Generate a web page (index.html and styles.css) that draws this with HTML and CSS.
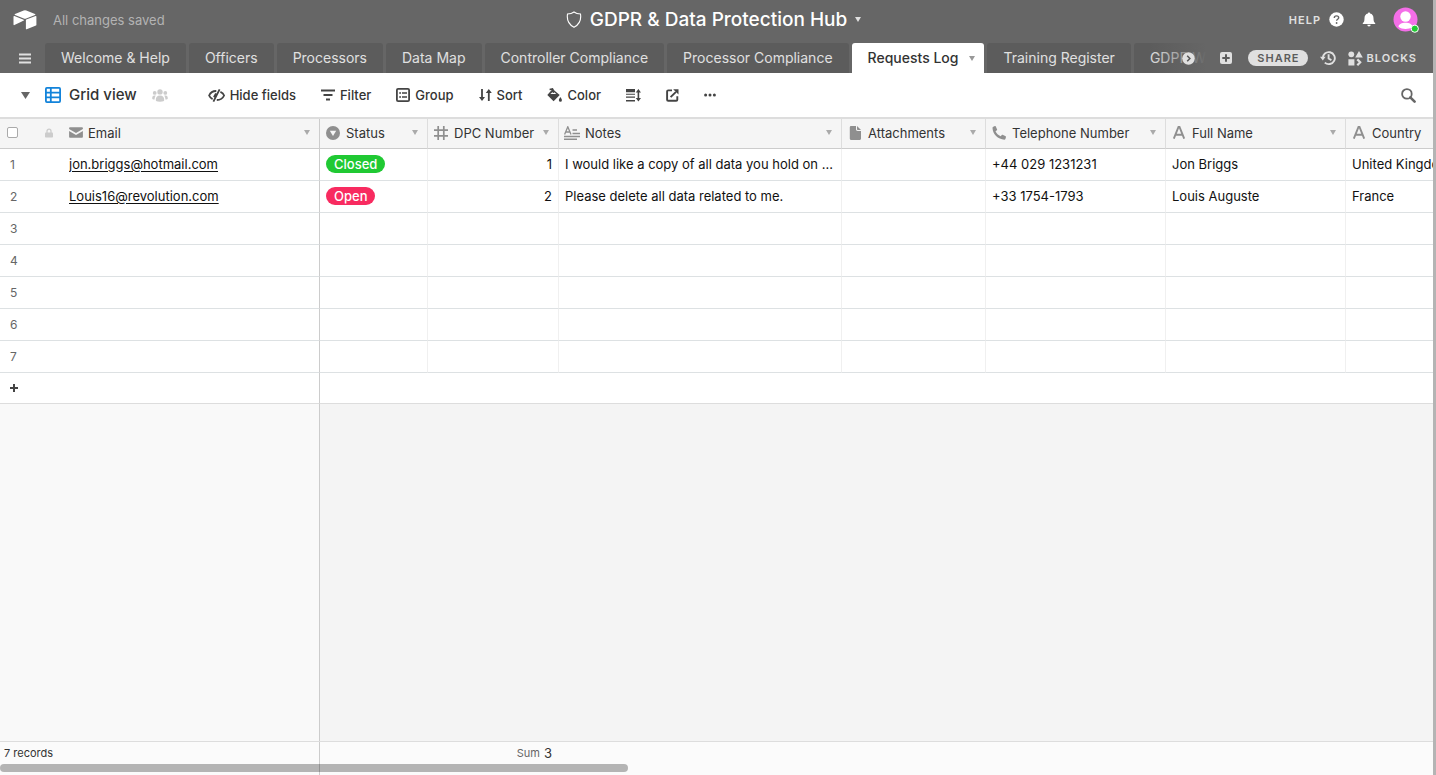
FILE: index.html
```html
<!DOCTYPE html>
<html lang="en">
<head>
<meta charset="utf-8">
<title>GDPR &amp; Data Protection Hub</title>
<link rel="stylesheet" href="styles.css">
</head>
<body>
<div class="app">
  <header class="header">
    <div class="topbar">
      <div class="topbar-left">
        <a href="#" class="logo" aria-label="Home"><svg width="24" height="20" viewBox="0 0 24 20" fill="#fff"><path d="M10.7.4 2 3.9c-.5.2-.5.8 0 1l8.800 3.500c.8.300 1.600.300 2.400 0L22 4.900c.5-.2.5-.8 0-1L13.300.4a3.400 3.400 0 0 0-2.600 0z"/><path d="M12.900 10.100v8.600c0 .4.400.7.800.5l9.300-3.600c.3-.1.400-.3.400-.5V6.500c0-.4-.4-.7-.8-.5l-9.300 3.600c-.2.100-.4.300-.4.500z"/><path d="m10.700 10.600-2.900 1.400-6.400 3.100c-.4.200-.9-.1-.9-.5V6.600c0-.500.5-.8.900-.6l9.200 3.700c.5.200.6.700.1.900z"/></svg></a>
        <span class="saved">All changes saved</span>
      </div>
      <button class="title"><svg width="16" height="18" viewBox="0 0 16 18" fill="none" stroke="#fff" stroke-width="1.1"><path d="M8 1C6.200 2.400 3.800 3 1.500 3c-.6 4 .2 10 6.500 13.300C14.300 13 15.100 7 14.500 3 12.200 3 9.800 2.400 8 1z"/></svg><span>GDPR &amp; Data Protection Hub</span><svg width="6" height="5" viewBox="0 0 6 5" fill="#e0e0e0"><path d="M0 0h6L3 5z"/></svg></button>
      <div class="topbar-right">
        <button class="help">HELP<svg width="15" height="15" viewBox="0 0 15 15"><circle cx="7.500" cy="7.500" r="7.200" fill="#fff"/><path d="M5.300 6c0-1.300 1-2.100 2.200-2.100S9.700 4.700 9.700 5.800c0 1.500-2.100 1.500-2.100 3" fill="none" stroke="#666" stroke-width="1.400"/><circle cx="7.600" cy="11" r=".9" fill="#666"/></svg></button>
        <button class="bell" aria-label="Notifications"><svg width="14" height="15" viewBox="0 0 14 15" fill="#fff"><path d="M7 .5c.7 0 1.100.5 1.100 1.100C10.400 2.100 11.500 4 11.500 6.200c0 3 .6 3.800 1.500 4.700.4.400.4 1.100-.3 1.100H1.300c-.7 0-.7-.7-.3-1.100.9-.9 1.500-1.700 1.500-4.700 0-2.200 1.100-4.100 3.400-4.600C5.900 1 6.300.5 7 .5zM5.300 12.800h3.400a1.700 1.700 0 0 1-3.400 0z"/></svg></button>
        <button class="avatar" aria-label="Account"><svg width="26" height="26" viewBox="0 0 26 26"><defs><clipPath id="face"><circle cx="12.500" cy="12.500" r="12"/></clipPath></defs><circle cx="12.500" cy="12.500" r="12" fill="#f46ee8"/><g clip-path="url(#face)" fill="#fff"><circle cx="12.500" cy="9.500" r="5.200"/><path d="M5.500 19.800c0-2.500 3.500-4 7-4s7 1.500 7 4c-1.800 1.600-4.500 2.200-7 2.200s-5.200-.6-7-2.200z"/></g><circle cx="21.800" cy="21.700" r="3.600" fill="#20c933" stroke="#fff" stroke-width="1"/></svg></button>
      </div>
    </div>
    <div class="tabbar">
      <button class="menu" aria-label="Menu"><svg width="12" height="11" viewBox="0 0 12 11" stroke="#e0e0e0" stroke-width="2"><path d="M0 1.500h12M0 5.500h12M0 9.500h12"/></svg></button>
      <nav class="tabs">
        <button class="tab">Welcome &amp; Help</button>
        <button class="tab">Officers</button>
        <button class="tab">Processors</button>
        <button class="tab">Data Map</button>
        <button class="tab">Controller Compliance</button>
        <button class="tab">Processor Compliance</button>
        <button class="tab active">Requests Log<svg width="6" height="5" viewBox="0 0 6 5" fill="#999"><path d="M0 0h6L3 5z"/></svg></button>
        <button class="tab">Training Register</button>
        <button class="tab">GDPR Wiki</button>
        <button class="more" aria-label="More tables"><svg width="13" height="13" viewBox="0 0 13 13"><circle cx="6.500" cy="6.500" r="6.200" fill="#e0e0e0"/><path d="m5.200 3.800 2.700 2.700-2.700 2.700" fill="none" stroke="#555" stroke-width="1.500"/></svg></button>
      </nav>
      <div class="actions">
        <button class="add" aria-label="Add table"><svg width="12" height="12" viewBox="0 0 12 12"><rect width="12" height="12" rx="2" fill="#e0e0e0"/><path d="M6 2.300v7.400M2.300 6h7.400" stroke="#5c5c5c" stroke-width="2"/></svg></button>
        <button class="share">SHARE</button>
        <button class="history" aria-label="History"><svg width="16" height="16" viewBox="0 0 16 16" fill="none" stroke="#e0e0e0" stroke-width="1.900"><path d="M2.800 8.400a6 6 0 1 1 2 4.200M8.600 4.300v4.200l2.800 1.600"/><path d="M0 6.800h5.600L2.800 10.400z" fill="#e0e0e0" stroke="none"/></svg></button>
        <button class="blocks"><svg width="15" height="15" viewBox="0 0 15 15" fill="#e0e0e0"><circle cx="3.300" cy="3.300" r="2.900"/><path d="M11 0l3.800 6.400H7.200zM.4 8.200h6V14.400h-6z"/><path d="m9.300 8.400 2.900 2.900-2.900 2.900" fill="none" stroke="#e0e0e0" stroke-width="2.200"/></svg>BLOCKS</button>
      </div>
    </div>
  </header>

  <div class="toolbar">
    <button class="collapse" aria-label="Toggle views"><svg width="9" height="7" viewBox="0 0 9 7" fill="#666"><path d="M0 0h9L4.500 7z"/></svg></button>
    <button class="view"><svg width="16" height="16" viewBox="0 0 16 16" fill="none" stroke="#1283da" stroke-width="1.800"><rect x=".9" y=".9" width="14.200" height="14.200" rx="1"/><path d="M5.800 1v14M1 5.600h14M1 10.400h14"/></svg><span>Grid view</span></button>
    <span class="people"><svg width="16" height="13" viewBox="0 0 16 13" fill="#ccc"><circle cx="8" cy="2.900" r="2.700"/><circle cx="2.700" cy="3.900" r="1.900"/><circle cx="13.300" cy="3.900" r="1.900"/><path d="M3.800 11c0-2.700 1.300-4.400 4.200-4.400s4.200 1.700 4.200 4.400c0 1.200-.8 1.700-4.200 1.700S3.800 12.200 3.800 11zM.2 9.200c0-1.800.7-2.800 2.200-2.800.6 0 1 .1 1.400.4-.9 1-1.200 2.200-1.200 3.800C1 10.600.2 10.200.2 9.200zM15.800 9.200c0-1.800-.7-2.800-2.200-2.800-.6 0-1 .1-1.400.4.900 1 1.200 2.200 1.200 3.800 1.600 0 2.400-.4 2.400-1.400z"/></svg></span>
    <div class="tools">
      <button><svg width="17" height="13" viewBox="0 0 17 13" fill="none" stroke="#444" stroke-width="1.800"><path d="M8.300 2C4.300 1.900 2 4.500 1.100 6.500c.6 1.500 1.700 2.700 3.500 3.600M12.400 2.900c2 .9 3.200 2.200 3.700 3.600-.9 2-3.200 4.500-7.300 4.500M11.600.4 5.400 12.600M8 4.400 5.900 8.300"/></svg>Hide fields</button>
      <button><svg width="14" height="12" viewBox="0 0 14 12" stroke="#444" stroke-width="2"><path d="M0 1.500h14M2.500 6h9M5 10.500h4"/></svg>Filter</button>
      <button><svg width="14" height="14" viewBox="0 0 14 14" fill="none" stroke="#444"><rect x=".9" y=".9" width="12.200" height="12.200" rx="1.200" stroke-width="1.800"/><path d="M3.200 5h1.800M6 5h5M3.200 9h1.800M6 9h5" stroke-width="1.600"/></svg>Group</button>
      <button><svg width="13" height="12" viewBox="0 0 13 12" fill="#444"><path d="M2.100 0h1.800v8H6L3 12 0 8h2.100zM8.900 12h1.800V4h2.100L9.800 0l-3 4h2.100z"/></svg>Sort</button>
      <button><svg width="15" height="14" viewBox="0 0 15 14"><path d="M5.600 1.100 12.700 7 6.600 13.200.3 7z" fill="#444"/><path d="M2.600 1.400 5.500.9l1.800 4" fill="none" stroke="#444" stroke-width="1.500"/><path d="M3.300 6.100h6L6.300 3.400z" fill="#fff"/><path d="M6.300 2v3" stroke="#444" stroke-width="1.200"/><path d="M13.300 9c1 1.500 1.600 2.300 1.600 3.200a1.500 1.500 0 0 1-3 0c0-.9.600-1.700 1.400-3.200z" fill="#444"/></svg>Color</button>
      <button aria-label="Row height"><svg width="15" height="13" viewBox="0 0 15 13" fill="#444"><path d="M0 0h9v3.300H0zM0 4.800h9v1H0zM0 7.600h9v1.200H0zM0 11h9v1.500H0zM11.600 2.500h1.600v7.500h-1.600z"/><path d="M12.400 0 15 3.400H9.800zM12.400 12.500 9.800 9.100H15z"/></svg></button>
      <button aria-label="Share view"><svg width="13" height="13" viewBox="0 0 13 13" fill="none" stroke="#444" stroke-width="1.900"><path d="M6 1.400H2.200c-.7 0-1.100.4-1.100 1.100v8.200c0 .7.400 1.100 1.100 1.100h8c.7 0 1.100-.4 1.100-1.100V7.200M4.600 8.200 10 2.800"/><path d="M7.200.3h5.300v5.300z" fill="#444" stroke="none"/></svg></button>
      <button aria-label="More options"><svg width="12" height="4" viewBox="0 0 12 4" fill="#444"><circle cx="1.600" cy="2" r="1.500"/><circle cx="6" cy="2" r="1.500"/><circle cx="10.400" cy="2" r="1.500"/></svg></button>
    </div>
    <button class="search" aria-label="Search"><svg width="15" height="15" viewBox="0 0 15 15" fill="none" stroke="#666"><circle cx="5.900" cy="5.900" r="4.800" stroke-width="1.800"/><path d="m9.300 9.300 4.300 4.300" stroke-width="2.600" stroke-linecap="round"/></svg></button>
  </div>

  <main class="grid">
    <table>
      <colgroup><col class="c-num"><col class="c-email"><col class="c-status"><col class="c-dpc"><col class="c-notes"><col class="c-attach"><col class="c-wide"><col class="c-wide"><col class="c-wide"></colgroup>
      <thead>
        <tr>
          <th><div class="rowhead"><input type="checkbox" aria-label="Select all records"><svg width="8" height="10" viewBox="0 0 8 10"><path d="M2 5V3.200a2 2 0 0 1 4 0V5" fill="none" stroke="#ccc" stroke-width="1.300"/><rect y="4.500" width="8" height="5" rx=".8" fill="#ccc"/></svg></div></th>
          <th class="frozen"><div class="field flush"><svg width="14" height="11" viewBox="0 0 15 11" fill="#8f8f8f" preserveAspectRatio="none"><path d="M1 .3h13c.6 0 .9.400.9 1v.8L7.500 6 .1 2.100v-.8c0-.6.300-1 .9-1z"/><path d="M.1 4 7.500 7.900 14.900 4v5.700c0 .6-.3 1-.9 1H1c-.6 0-.9-.4-.9-1z"/></svg><span>Email</span><i></i></div></th>
          <th><div class="field"><svg width="14" height="14" viewBox="0 0 14 14"><circle cx="7" cy="7" r="7" fill="#8f8f8f"/><path d="M3.800 4.800h6.400L7 10z" fill="#f5f5f5"/></svg><span>Status</span><i></i></div></th>
          <th><div class="field"><svg width="14" height="14" viewBox="0 0 14 14" stroke="#8f8f8f" stroke-width="1.700"><path d="M4.200 0v14M9.800 0v14M0 4.200h14M0 9.800h14"/></svg><span>DPC Number</span><i></i></div></th>
          <th><div class="field notes"><svg width="16" height="14" viewBox="0 0 16 14" fill="none" stroke="#8f8f8f"><path d="M.6 8.500 3.800.8l3.200 7.700M1.700 6h4.200" stroke-width="1.300"/><path d="M8.500 4.100H13M8.500 7.400H16M0 10.400h16M0 13.200h13" stroke-width="1.500"/></svg><span>Notes</span><i></i></div></th>
          <th><div class="field"><svg width="14" height="14" viewBox="0 0 14 14" fill="#8f8f8f"><path d="M3 0h5v3.300C8 4.400 8.600 5 9.700 5H13v7.500c0 .9-.6 1.500-1.500 1.500H3.300c-.9 0-1.500-.6-1.500-1.500v-11C1.800.6 2.200 0 3 0z"/><path d="M9 0l4 4H9.800C9.200 4 9 3.700 9 3.200z"/></svg><span>Attachments</span><i></i></div></th>
          <th><div class="field"><svg width="14" height="14" viewBox="0 0 14 14" fill="#8f8f8f"><path d="M1.300.7 2.900 0c.4-.1.700 0 .9.400l1.300 3c.1.300.1.600-.2.800L3.500 5.300c.9 2.100 2.800 4 5.200 5l1.100-1.300c.2-.3.500-.3.800-.2l3 1.400c.4.200.5.500.4.900l-.6 1.800c-.2.500-.5.800-1 .8C6 13.700.4 8 .5 1.700c0-.5.300-.8.800-1z"/></svg><span>Telephone Number</span><i></i></div></th>
          <th><div class="field"><svg width="14" height="13" viewBox="0 0 14 13" fill="none" stroke="#8f8f8f" stroke-width="1.900"><path d="M1.800 12.700 6.500 1h1l4.700 11.700M3.400 8.700h7.200"/></svg><span>Full Name</span><i></i></div></th>
          <th><div class="field"><svg width="14" height="13" viewBox="0 0 14 13" fill="none" stroke="#8f8f8f" stroke-width="1.900"><path d="M1.800 12.700 6.500 1h1l4.700 11.700M3.400 8.700h7.200"/></svg><span>Country</span><i></i></div></th>
        </tr>
      </thead>
      <tbody>
        <tr><td class="num">1</td><td class="frozen email"><a href="#">jon.briggs@hotmail.com</a></td><td><span class="pill closed">Closed</span></td><td class="right">1</td><td>I would like a copy of all data you hold on ...</td><td></td><td>+44 029 1231231</td><td>Jon Briggs</td><td>United Kingdom</td></tr>
        <tr><td class="num">2</td><td class="frozen email"><a href="#">Louis16@revolution.com</a></td><td><span class="pill open">Open</span></td><td class="right">2</td><td>Please delete all data related to me.</td><td></td><td>+33 1754-1793</td><td>Louis Auguste</td><td>France</td></tr>
        <tr><td class="num">3</td><td class="frozen"></td><td></td><td></td><td></td><td></td><td></td><td></td><td></td></tr>
        <tr><td class="num">4</td><td class="frozen"></td><td></td><td></td><td></td><td></td><td></td><td></td><td></td></tr>
        <tr><td class="num">5</td><td class="frozen"></td><td></td><td></td><td></td><td></td><td></td><td></td><td></td></tr>
        <tr><td class="num">6</td><td class="frozen"></td><td></td><td></td><td></td><td></td><td></td><td></td><td></td></tr>
        <tr><td class="num">7</td><td class="frozen"></td><td></td><td></td><td></td><td></td><td></td><td></td><td></td></tr>
        <tr class="addrow"><td class="frozen" colspan="2"><button aria-label="Add record"><svg width="8" height="8" viewBox="0 0 8 8" stroke="#444" stroke-width="2"><path d="M4 0v8M0 4h8"/></svg></button></td><td colspan="7"></td></tr>
      </tbody>
    </table>
    <div class="empty"><div class="empty-left"></div></div>
  </main>

  <footer class="summary">
    <div class="records">7 records</div>
    <div class="sum"><span>Sum</span>3</div>
    <div class="scroll"></div>
  </footer>
</div>
</body>
</html>
```
FILE: styles.css
```css
* { box-sizing: border-box; }
body {
  margin: 0;
  font: 13px/18px Inter, "Liberation Sans", sans-serif;
  color: #111;
  background: #b4b4b4;
}
button {
  font: inherit;
  color: inherit;
  background: none;
  border: 0;
  padding: 0;
  margin: 0;
  white-space: nowrap;
  display: flex;
  align-items: center;
}
svg { display: block; flex: none; }

.app {
  height: 100vh;
  margin-right: 3px;
  display: flex;
  flex-direction: column;
  overflow: hidden;
  background: #fff;
}

/* Header */
.header { background: #666; color: #fff; flex: none; }
.topbar {
  height: 43px;
  padding: 0 14px 4px 13px;
  display: grid;
  grid-template-columns: 1fr auto 1fr;
  align-items: center;
}
.topbar-left { display: flex; align-items: center; gap: 16px; }
.saved { color: #b3b3b3; }
.title { font-size: 19px; font-weight: 500; line-height: 24px; gap: 8px; margin-right: 5px; }
.topbar-right { display: flex; align-items: center; justify-content: flex-end; }
.help { font-size: 11px; font-weight: 600; color: #e0e0e0; gap: 8px; letter-spacing: 1px; }
.bell { margin: 0 17px 0 18px; }

.tabbar { display: flex; height: 30px; }
.menu { width: 45px; padding-left: 19px; flex: none; }
.tabs { flex: 1; min-width: 0; display: flex; gap: 3px; overflow: hidden; position: relative; }
.tabs::after {
  content: "";
  position: absolute;
  inset: 0 0 0 auto;
  width: 64px;
  background: linear-gradient(90deg, #66666600, #666 90%);
}
.tab {
  flex: none;
  padding: 0 16px;
  font-size: 14px;
  color: #e0e0e0;
  background: #5c5c5c;
  border-radius: 3px 3px 0 0;
}
.tab.active { background: #fff; color: #333; font-weight: 500; gap: 11px; padding-right: 9px; }
.more { position: absolute; right: 18px; top: 9px; z-index: 1; }
.actions { display: flex; align-items: center; flex: none; padding-right: 16px; }
.add { margin: 0 16px 0 7px; }
.share, .blocks { font-size: 11px; font-weight: 600; letter-spacing: 1px; line-height: 16px; }
.share { background: #e0e0e0; color: #5c5c5c; border-radius: 8px; padding: 0 8px 0 9px; }
.history { margin: 0 12px; }
.blocks { color: #e0e0e0; gap: 4px; }

/* View toolbar */
.toolbar {
  flex: none;
  height: 46px;
  display: flex;
  align-items: center;
  padding: 0 17px 0 21px;
  border-bottom: 2px solid #ddd;
  color: #333;
}
.view { margin-left: 15px; gap: 8px; font-size: 15px; font-weight: 500; }
.people { margin: 0 40px 0 15px; }
.tools { display: flex; align-items: center; gap: 25px; font-weight: 500; }
.tools button { gap: 5px; }
.search { margin-left: auto; }

/* Grid */
.grid { flex: 1; min-height: 0; display: flex; flex-direction: column; overflow: hidden; }
table { width: 1526px; table-layout: fixed; border-collapse: separate; border-spacing: 0; flex: none; }
.c-num { width: 69px; }
.c-email { width: 251px; }
.c-status { width: 108px; }
.c-dpc { width: 131px; }
.c-notes { width: 283px; }
.c-attach { width: 144px; }
.c-wide { width: 180px; }
th {
  height: 30px;
  padding: 0 0 2px;
  font-weight: 400;
  text-align: left;
  color: #333;
  background: #f5f5f5;
  border-bottom: 1px solid #ccc;
  border-right: 1px solid #ddd;
}
th:first-child { border-right: 0; }
.rowhead { display: flex; align-items: center; justify-content: space-between; padding: 0 16px 0 7px; }
.rowhead input {
  appearance: none;
  width: 11px;
  height: 11px;
  margin: 0;
  background: #fff;
  border: 1px solid #aaa;
  border-radius: 2px;
}
.field { display: flex; align-items: center; gap: 6px; padding: 0 9px 0 6px; white-space: nowrap; }
.field.flush { padding-left: 0; gap: 5px; }
.field.notes { gap: 5px; padding-left: 5px; }
.field i {
  margin-left: auto;
  border: 3px solid transparent;
  border-top: 5px solid #aaa;
  border-bottom: 0;
}
td {
  height: 32px;
  padding: 0 6px 2px;
  white-space: nowrap;
  overflow: hidden;
  border-bottom: 1px solid #dde1e3;
  border-right: 1px solid #f0f0f0;
}
td.num { padding: 0 0 0 10px; font-size: 12px; color: #666; border-right: 0; }
th.frozen, td.frozen { border-right: 1px solid #ccc; }
td.email { padding-left: 0; }
td a { color: inherit; text-underline-offset: 2px; }
td.right { text-align: right; }
.pill {
  display: inline-block;
  padding: 0 8px;
  border-radius: 9px;
  color: #fff;
  font-weight: 500;
  vertical-align: middle;
}
.closed { background: #20c933; }
.open { background: #f82b60; }
.addrow td { height: 31px; border-bottom-color: #ddd; }
.addrow td:first-child { padding: 0 0 0 10px; }
.empty { flex: 1; background: #f4f4f4; display: flex; }
.empty-left { width: 320px; background: #f9f9f9; border-right: 1px solid #ccc; }

/* Summary bar */
.summary {
  flex: none;
  position: relative;
  height: 34px;
  display: flex;
  border-top: 1px solid #ddd;
  background: #fbfbfb;
  font-size: 11px;
  line-height: 22px;
  color: #333;
}
.records { width: 320px; padding-left: 4px; border-right: 1px solid #ccc; }
.sum { width: 239px; padding-right: 7px; display: flex; justify-content: flex-end; gap: 4px; font-size: 13px; }
.sum span { font-size: 11px; color: #666; }
.scroll {
  position: absolute;
  left: 0;
  bottom: 3px;
  width: 628px;
  height: 8px;
  border-radius: 4px;
  background: #00000048;
}
```
